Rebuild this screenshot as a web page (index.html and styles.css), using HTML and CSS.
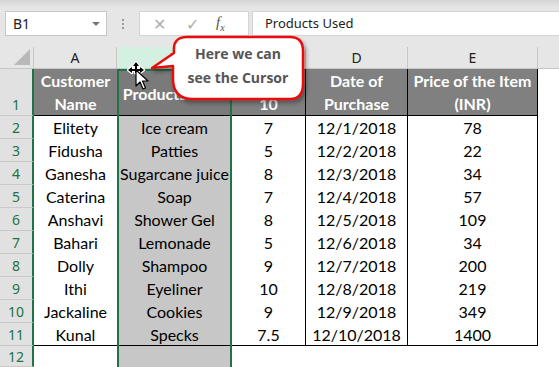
FILE: index.html
```html
<!DOCTYPE html>
<html>
  <head>
    <title>Products Used</title>
    <meta name="viewport" content="width=device-width, initial-scale=1.0">
    <link rel="stylesheet" href="styles.css">
  </head>
  <body>
    <div class="toolbar">
      <div class="namebox">
        <span>B1</span>
        <span class="drop"></span>
      </div>
      <div class="dots"><i></i><i></i><i></i></div>
      <div class="fxbox">
        <span class="cancel">&#x2715;</span>
        <span class="enter">&#x2713;</span>
        <span class="fx">f<sub>x</sub></span>
      </div>
      <div class="formula">Products Used</div>
    </div>

    <div class="sheet">
      <div class="corner"><span></span></div>
      <div class="colhead">A</div>
      <div class="colhead sel">B</div>
      <div class="colhead">C</div>
      <div class="colhead">D</div>
      <div class="colhead">E</div>
      <div class="colhead last"></div>

      <div class="rowhead tall">1</div>
      <div class="cell head">Customer<br>Name</div>
      <div class="cell head colb lowered">Products Used</div>
      <div class="cell head line">&nbsp;<br>10</div>
      <div class="cell head line">Date of<br>Purchase</div>
      <div class="cell head line">Price of the Item<br>(INR)</div>
      <div class="cell blank"></div>

      <div class="rowhead">2</div>
      <div class="cell">Elitety</div><div class="cell colb">Ice cream</div><div class="cell line">7</div><div class="cell line">12/1/2018</div><div class="cell line">78</div><div class="cell blank"></div>
      <div class="rowhead">3</div>
      <div class="cell">Fidusha</div><div class="cell colb">Patties</div><div class="cell line">5</div><div class="cell line">12/2/2018</div><div class="cell line">22</div><div class="cell blank"></div>
      <div class="rowhead">4</div>
      <div class="cell">Ganesha</div><div class="cell colb">Sugarcane juice</div><div class="cell line">8</div><div class="cell line">12/3/2018</div><div class="cell line">34</div><div class="cell blank"></div>
      <div class="rowhead">5</div>
      <div class="cell">Caterina</div><div class="cell colb">Soap</div><div class="cell line">7</div><div class="cell line">12/4/2018</div><div class="cell line">57</div><div class="cell blank"></div>
      <div class="rowhead">6</div>
      <div class="cell">Anshavi</div><div class="cell colb">Shower Gel</div><div class="cell line">8</div><div class="cell line">12/5/2018</div><div class="cell line">109</div><div class="cell blank"></div>
      <div class="rowhead">7</div>
      <div class="cell">Bahari</div><div class="cell colb">Lemonade</div><div class="cell line">5</div><div class="cell line">12/6/2018</div><div class="cell line">34</div><div class="cell blank"></div>
      <div class="rowhead">8</div>
      <div class="cell">Dolly</div><div class="cell colb">Shampoo</div><div class="cell line">9</div><div class="cell line">12/7/2018</div><div class="cell line">200</div><div class="cell blank"></div>
      <div class="rowhead">9</div>
      <div class="cell">Ithi</div><div class="cell colb">Eyeliner</div><div class="cell line">10</div><div class="cell line">12/8/2018</div><div class="cell line">219</div><div class="cell blank"></div>
      <div class="rowhead">10</div>
      <div class="cell">Jackaline</div><div class="cell colb">Cookies</div><div class="cell line">9</div><div class="cell line">12/9/2018</div><div class="cell line">349</div><div class="cell blank"></div>
      <div class="rowhead">11</div>
      <div class="cell bottom">Kunal</div><div class="cell colb bottom">Specks</div><div class="cell line bottom">7.5</div><div class="cell line bottom">12/10/2018</div><div class="cell line bottom">1400</div><div class="cell blank"></div>
      <div class="rowhead">12</div>
      <div class="cell"></div><div class="cell colb"></div><div class="cell"></div><div class="cell"></div><div class="cell"></div><div class="cell blank"></div>

      <div class="selection"></div>

      <svg class="callout" width="180" height="90" viewBox="0 0 180 90">
        <defs>
          <filter id="shadow" x="-10%" y="-10%" width="130%" height="140%">
            <feDropShadow dx="2" dy="3" stdDeviation="2" flood-color="#000" flood-opacity="0.35"/>
          </filter>
        </defs>
        <path d="M43 8 H146 Q159 8 159 22 V55 Q159 70 146 70 H49 Q29 70 29 50 V37 L8 39 L30 24 V22 Q29 8 43 8 Z"
              fill="#fff" stroke="#e8100f" stroke-width="2.5" stroke-linejoin="round" filter="url(#shadow)"/>
        <text x="94" y="30" text-anchor="middle">Here we can</text>
        <text x="94" y="54" text-anchor="middle">see the Cursor</text>
      </svg>

      <svg class="cursor" width="24" height="32" viewBox="0 0 24 32">
        <path d="M9 1 L12 5 H10 V8 H13 V6 L17 9 L13 12 V10 H10 V12 H8 V10 H5 V12 L1 9 L5 6 V8 H8 V5 H6 Z"
              fill="#fff" stroke="#fff" stroke-width="2.4" stroke-linejoin="round"/>
        <path d="M9 1 L12 5 H10 V8 H13 V6 L17 9 L13 12 V10 H10 V12 H8 V10 H5 V12 L1 9 L5 6 V8 H8 V5 H6 Z" fill="#000"/>
        <path d="M9 9 V25 L13 21 L16 28 L18.5 27 L15.5 20 H21 Z" fill="#fff" stroke="#000" stroke-width="1.2" stroke-linejoin="round"/>
      </svg>
    </div>
  </body>
</html>
```

FILE: styles.css
```css
body {
  margin: 0;
  background-color: #fff;
  font-family: 'Lato', 'Liberation Sans', sans-serif;
  overflow: hidden;
}
.toolbar {
  height: 47px;
  display: flex;
  align-items: flex-start;
  padding: 11px 0 0 5px;
  box-sizing: border-box;
  background: linear-gradient(#d4d4d4, #e6e6e6 7px);
  font-family: 'Noto Sans', 'Liberation Sans', sans-serif;
  font-size: 13px;
  color: #222;
}
.namebox {
  width: 102px;
  height: 25px;
  box-sizing: border-box;
  background: #fff;
  border: 1px solid #c6c6c6;
  display: flex;
  align-items: center;
  justify-content: space-between;
  padding: 0 6px 0 7px;
  font-size: 14px;
}
.drop {
  width: 0;
  height: 0;
  border-left: 4px solid transparent;
  border-right: 4px solid transparent;
  border-top: 4px solid #777;
}
.dots {
  width: 32px;
  height: 25px;
  display: flex;
  flex-direction: column;
  align-items: center;
  justify-content: center;
  gap: 2px;
}
.dots i {
  width: 2px;
  height: 2px;
  background: #9a9a9a;
}
.fxbox {
  width: 110px;
  height: 25px;
  box-sizing: border-box;
  background: #fff;
  border: 1px solid #d4d4d4;
  display: flex;
  align-items: center;
  padding: 0 0 0 13px;
  gap: 20px;
  color: #b0b0b0;
  font-size: 16px;
}
.fxbox .fx {
  color: #555;
  font-family: 'Liberation Serif', serif;
  font-style: italic;
  font-size: 15px;
  margin-left: -3px;
}
.fxbox .fx sub {
  font-size: 10px;
}
.formula {
  flex: 1;
  height: 25px;
  box-sizing: border-box;
  margin-left: 3px;
  background: #fff;
  border: 1px solid #d4d4d4;
  border-right: none;
  padding: 2px 0 0 12px;
}
.sheet {
  position: relative;
  display: grid;
  grid-template-columns: 34px 83px 115px 74px 102px 130px 21px;
  grid-template-rows: 22px 47px repeat(10, 23px) 21px;
  font-size: 16px;
  color: #000;
}
.corner {
  background: #e6e6e6;
  border-right: 1px solid #c6c6c6;
  border-bottom: 1px solid #c6c6c6;
  position: relative;
}
.corner span {
  position: absolute;
  right: 3px;
  bottom: 3px;
  width: 0;
  height: 0;
  border-left: 16px solid transparent;
  border-bottom: 16px solid #b9b9b9;
}
.colhead {
  background: #e6e6e6;
  border-right: 1px solid #c6c6c6;
  border-bottom: 1px solid #c6c6c6;
  display: flex;
  align-items: center;
  justify-content: center;
  font-family: 'Noto Sans', 'Liberation Sans', sans-serif;
  font-size: 14px;
  color: #222;
}
.colhead.sel {
  background: #d3f0e0;
  color: #1e6b41;
}
.colhead.last {
  border-right: none;
}
.rowhead {
  background: #e1e1e1;
  border-right: 2px solid #217346;
  border-bottom: 1px solid #cacaca;
  color: #217346;
  font-family: 'Noto Sans', 'Liberation Sans', sans-serif;
  font-size: 14px;
  display: flex;
  align-items: center;
  justify-content: center;
}
.rowhead.tall {
  align-items: flex-end;
  padding-bottom: 1px;
}
.cell {
  display: flex;
  align-items: center;
  justify-content: center;
  text-align: center;
  white-space: nowrap;
  box-sizing: border-box;
  line-height: 23px;
}
.cell.head {
  background: #808080;
  color: #fff;
  font-weight: bold;
  border-bottom: 1px solid #000;
}
.cell.head.colb {
  background: #7a7a7a;
}
.cell.lowered {
  padding-top: 2px;
}
.cell.colb {
  background: #c7c7c7;
}
.cell.line {
  border-right: 1px solid #000;
}
.cell.bottom {
  border-bottom: 1px solid #000;
}
.selection {
  position: absolute;
  left: 117px;
  top: 22px;
  width: 115px;
  bottom: -4px;
  box-sizing: border-box;
  border: 2px solid #217346;
}
.callout {
  position: absolute;
  left: 144px;
  top: -18px;
  overflow: visible;
}
.callout text {
  font-family: 'Open Sans', 'Liberation Sans', sans-serif;
  font-weight: bold;
  font-size: 14px;
  fill: #555;
}
.cursor {
  position: absolute;
  left: 127px;
  top: 14px;
}
```
